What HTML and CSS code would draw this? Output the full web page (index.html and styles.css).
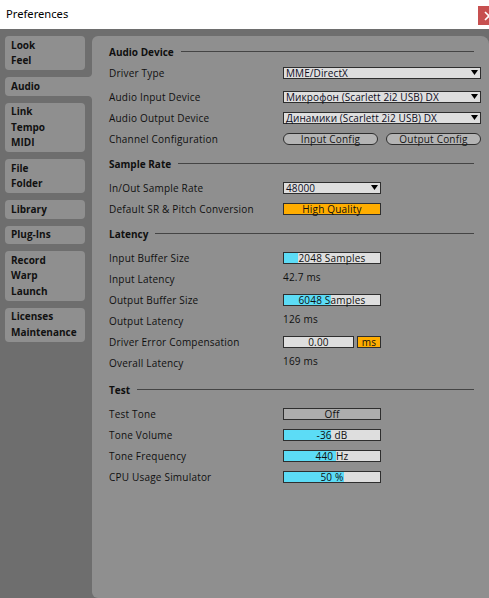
FILE: index.html
```
<!DOCTYPE html>
<html lang="en">
<head>
    <meta charset="UTF-8">
    <title>Preferences</title>
    <link rel="stylesheet" href="styles.css">
</head>
<body>
    <div class="titlebar">
        <span class="title">Preferences</span>
        <span class="close"><svg width="10" height="10" viewBox="0 0 10 10"><path d="M1 1l8 8M9 1l-8 8" stroke="#fff" stroke-width="1.6"/></svg></span>
    </div>
    <div class="window">
        <nav class="tabs">
            <div class="tab">Look<br>Feel</div>
            <div class="tab active">Audio</div>
            <div class="tab">Link<br>Tempo<br>MIDI</div>
            <div class="tab">File<br>Folder</div>
            <div class="tab">Library</div>
            <div class="tab">Plug-Ins</div>
            <div class="tab">Record<br>Warp<br>Launch</div>
            <div class="tab">Licenses<br>Maintenance</div>
        </nav>
        <main class="panel">
            <section class="group group-first">
                <h2 class="group-title">Audio Device</h2>
                <div class="row row-driver">
                    <span class="label">Driver Type</span>
                    <div class="select wide"><span>MME/DirectX</span><svg width="7" height="5" viewBox="0 0 7 5"><path d="M0 0h7L3.5 5z" fill="#000"/></svg></div>
                </div>
                <div class="row">
                    <span class="label">Audio Input Device</span>
                    <div class="select wide"><span>Микрофон (Scarlett 2i2 USB) DX</span><svg width="7" height="5" viewBox="0 0 7 5"><path d="M0 0h7L3.5 5z" fill="#000"/></svg></div>
                </div>
                <div class="row">
                    <span class="label">Audio Output Device</span>
                    <div class="select wide"><span>Динамики (Scarlett 2i2 USB) DX</span><svg width="7" height="5" viewBox="0 0 7 5"><path d="M0 0h7L3.5 5z" fill="#000"/></svg></div>
                </div>
                <div class="row">
                    <span class="label">Channel Configuration</span>
                    <div class="buttons">
                        <button class="pill">Input Config</button>
                        <button class="pill">Output Config</button>
                    </div>
                </div>
            </section>

            <section class="group">
                <h2 class="group-title">Sample Rate</h2>
                <div class="row">
                    <span class="label">In/Out Sample Rate</span>
                    <div class="select"><span>48000</span><svg width="7" height="5" viewBox="0 0 7 5"><path d="M0 0h7L3.5 5z" fill="#000"/></svg></div>
                </div>
                <div class="row">
                    <span class="label">Default SR &amp; Pitch Conversion</span>
                    <div class="box orange">High Quality</div>
                </div>
            </section>

            <section class="group">
                <h2 class="group-title">Latency</h2>
                <div class="row">
                    <span class="label">Input Buffer Size</span>
                    <div class="box meter" style="--fill: 15%">2048 Samples</div>
                </div>
                <div class="row">
                    <span class="label">Input Latency</span>
                    <span class="value">42.7 ms</span>
                </div>
                <div class="row">
                    <span class="label">Output Buffer Size</span>
                    <div class="box meter" style="--fill: 49%">6048 Samples</div>
                </div>
                <div class="row">
                    <span class="label">Output Latency</span>
                    <span class="value">126 ms</span>
                </div>
                <div class="row">
                    <span class="label">Driver Error Compensation</span>
                    <div class="box short">0.00</div>
                    <div class="box orange unit">ms</div>
                </div>
                <div class="row">
                    <span class="label">Overall Latency</span>
                    <span class="value">169 ms</span>
                </div>
            </section>

            <section class="group group-test">
                <h2 class="group-title">Test</h2>
                <div class="row">
                    <span class="label">Test Tone</span>
                    <div class="box toggle">Off</div>
                </div>
                <div class="row">
                    <span class="label">Tone Volume</span>
                    <div class="box meter" style="--fill: 49%">-36 dB</div>
                </div>
                <div class="row">
                    <span class="label">Tone Frequency</span>
                    <div class="box meter" style="--fill: 54%">440 Hz</div>
                </div>
                <div class="row">
                    <span class="label">CPU Usage Simulator</span>
                    <div class="box meter" style="--fill: 62%">50 %</div>
                </div>
            </section>
        </main>
    </div>
</body>
</html>
```

FILE: styles.css
```
* {
    box-sizing: border-box;
}

body {
    margin: 0;
    width: 489px;
    height: 598px;
    overflow: hidden;
    background-color: #6e6e6e;
    font-family: 'Open Sans', 'Noto Sans', sans-serif;
    font-size: 10px;
    letter-spacing: 0.2px;
    color: #0f0f0f;
}

.titlebar {
    height: 29px;
    background-color: #fff;
    display: flex;
    align-items: flex-start;
    justify-content: space-between;
}

.title {
    font-family: 'Noto Sans', sans-serif;
    font-size: 11.2px;
    letter-spacing: 0;
    color: #000;
    margin: 6px 0 0 6px;
}

.close {
    display: flex;
    align-items: center;
    width: 30px;
    height: 19px;
    margin: 6px -19px 0 0;
    padding-left: 6px;
    background-color: #c75050;
}

.window {
    display: flex;
    height: 569px;
    padding-top: 7px;
}

/* left column of tabs */
.tabs {
    width: 80px;
    margin: 0 7px 0 5px;
    display: flex;
    flex-direction: column;
    gap: 7px;
}

.tab {
    background-color: #8f8f8f;
    border-radius: 4px;
    padding: 1.5px 0 1.5px 6px;
    line-height: 15.5px;
    font-weight: 700;
    letter-spacing: 0;
    color: #111;
}

.tab.active {
    margin-right: -7px;
    border-radius: 4px 0 0 4px;
    position: relative;
}

.tab.active::before,
.tab.active::after {
    content: '';
    position: absolute;
    right: 0;
    width: 4px;
    height: 4px;
}

.tab.active::before {
    top: -4px;
    background: radial-gradient(circle at 0 0, #6e6e6e 3.5px, #8f8f8f 4.5px);
}

.tab.active::after {
    bottom: -4px;
    background: radial-gradient(circle at 0 100%, #6e6e6e 3.5px, #8f8f8f 4.5px);
}

/* main panel */
.panel {
    flex: 1;
    background-color: #8f8f8f;
    border-radius: 6px 8px 0 6px;
    padding: 5px 0 0 17px;
}

.group + .group {
    margin-top: 4px;
}

.group-test.group {
    margin-top: 6px;
}

.group-title {
    display: flex;
    align-items: center;
    height: 21px;
    margin: 0 15px 3px 0;
    font-size: 10px;
    font-weight: 700;
    letter-spacing: 0;
}

.group-title::after {
    content: '';
    flex: 1;
    height: 1px;
    margin-left: 7px;
    background-color: #444;
}

.group-first .group-title {
    margin-bottom: 0;
}

.row {
    display: flex;
    align-items: center;
    height: 21px;
}

.row-driver {
    margin-bottom: 3px;
}

.label {
    width: 174px;
    flex: none;
}

.value {
    padding-bottom: 3px;
}

.select,
.box {
    height: 12px;
    width: 98px;
    border: 1px solid #2e2e2e;
    background-color: #dedede;
    line-height: 10px;
    white-space: nowrap;
}

.select {
    display: flex;
    align-items: center;
    justify-content: space-between;
    padding: 0 2px;
    letter-spacing: 0.1px;
    color: #0c0c1c;
}

.select.wide {
    width: 198px;
}

.box {
    text-align: center;
}

.orange {
    background-color: #ffad00;
}

.toggle {
    background-color: #adadad;
}

.meter {
    background: linear-gradient(to right, #5cdcf6 var(--fill), #dedede var(--fill));
}

.short {
    width: 71px;
}

.unit {
    width: 24px;
    margin-left: 3px;
}

.buttons {
    display: flex;
    gap: 8px;
}

button.pill {
    width: 95px;
    height: 12px;
    padding: 0;
    border: 1px solid #2e2e2e;
    border-radius: 6px;
    background-color: #b4b4b4;
    font-family: inherit;
    font-size: 10px;
    letter-spacing: 0.2px;
    line-height: 10px;
    color: #151515;
}
```
